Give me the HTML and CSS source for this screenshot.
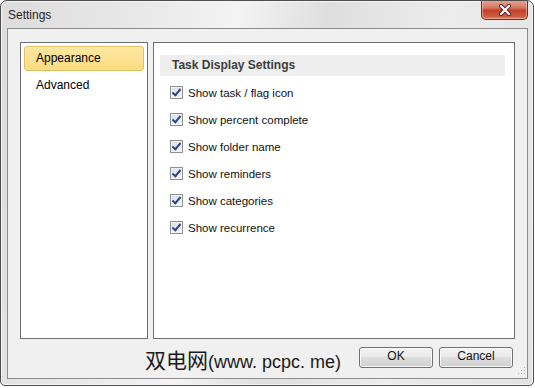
FILE: index.html
```html
<!DOCTYPE html>
<html lang="en">
<head>
  <meta charset="UTF-8" />
  <title>Settings</title>
  <link rel="stylesheet" href="styles.css">
</head>
<body>
  <div class="window">
    <div class="titlebar">
      <span class="title">Settings</span>
      <button class="close">
        <svg width="16" height="12" viewBox="0 0 16 12">
          <path d="M4 2 L12 10 M12 2 L4 10" stroke="#5a2218" stroke-width="4" stroke-linecap="round"/>
          <path d="M4 2 L12 10 M12 2 L4 10" stroke="#fff" stroke-width="2.2" stroke-linecap="round"/>
        </svg>
      </button>
    </div>

    <div class="client">
      <div class="panels">
        <div class="panel nav">
          <div class="nav-item active">Appearance</div>
          <div class="nav-item">Advanced</div>
        </div>

        <div class="panel content">
          <div class="section-head">Task Display Settings</div>
          <div class="option"><span class="check"></span>Show task / flag icon</div>
          <div class="option"><span class="check"></span>Show percent complete</div>
          <div class="option"><span class="check"></span>Show folder name</div>
          <div class="option"><span class="check"></span>Show reminders</div>
          <div class="option"><span class="check"></span>Show categories</div>
          <div class="option"><span class="check"></span>Show recurrence</div>
        </div>
      </div>

      <div class="footer">
        <span class="mark"><span class="mark-cn">双电网</span>(www. pcpc. me)</span>
        <button class="btn ok">OK</button>
        <button class="btn">Cancel</button>
        <svg class="grip" width="8" height="8" viewBox="0 0 8 8">
          <rect x="6" y="0" width="1" height="1" fill="#aaa"/>
          <rect x="3" y="3" width="1" height="1" fill="#aaa"/>
          <rect x="6" y="3" width="1" height="1" fill="#aaa"/>
          <rect x="0" y="6" width="1" height="1" fill="#aaa"/>
          <rect x="3" y="6" width="1" height="1" fill="#aaa"/>
          <rect x="6" y="6" width="1" height="1" fill="#aaa"/>
        </svg>
      </div>
    </div>
  </div>
</body>
</html>
```

FILE: styles.css
```css
* {
  box-sizing: border-box;
}

body {
  margin: 0;
  background: #fff;
  font-family: 'Liberation Sans', Arial, sans-serif;
  font-size: 12px;
  color: #000;
}

.window {
  width: 534px;
  height: 386px;
  border: 1px solid #4d4d4d;
  border-radius: 7px 7px 5px 5px;
  background: linear-gradient(100deg, #dcdcdc 0%, #e9e9e9 25%, #f3f3f3 40%, #dedede 55%, #ececec 75%, #e2e2e2 100%);
  box-shadow: inset 0 0 0 1px #f6f6f6;
  display: flex;
  flex-direction: column;
  overflow: hidden;
}

.titlebar {
  height: 27px;
  flex-shrink: 0;
  display: flex;
  align-items: flex-start;
  padding-left: 7px;
}

.title {
  margin-top: 7px;
  color: #1e1e1e;
}

.close {
  margin-left: auto;
  margin-right: 5px;
  margin-top: -1px;
  width: 47px;
  height: 20px;
  border: 1px solid #6b2a1e;
  border-top: none;
  border-radius: 0 0 5px 5px;
  background: linear-gradient(#e8a898 0%, #d77760 40%, #c0422b 55%, #cf5b40 85%, #e07a5c 100%);
  box-shadow: inset 0 0 0 1px rgba(255, 220, 210, 0.5);
  display: flex;
  align-items: center;
  justify-content: center;
  padding: 0;
}

.client {
  flex: 1;
  min-height: 0;
  margin: 0 5px 6px 6px;
  border: 1px solid #8c8c8c;
  background: #f0f0f0;
  padding: 13px 12px 0 12px;
  display: flex;
  flex-direction: column;
}

.panels {
  display: flex;
  gap: 5px;
  height: 297px;
  flex-shrink: 0;
}

.panel {
  background: #fff;
  border: 1px solid #6e6e6e;
}

.nav {
  width: 128px;
  padding: 3px;
}

.nav-item {
  height: 25px;
  line-height: 23px;
  padding-left: 11px;
  border: 1px solid transparent;
  border-radius: 3px;
  margin-bottom: 2px;
}

.nav-item.active {
  background: linear-gradient(#fde8a4, #fbdb7e);
  border-color: #e0c064;
}

.content {
  flex: 1;
  padding: 12px 9px 0 6px;
}

.section-head {
  height: 21px;
  line-height: 21px;
  background: #eeeeee;
  padding-left: 12px;
  font-weight: bold;
  color: #3c3c3c;
  margin-bottom: 3px;
}

.option {
  height: 27px;
  display: flex;
  align-items: center;
  padding-left: 10px;
  gap: 5px;
  color: #111;
  font-size: 11.5px;
}

.check {
  width: 13px;
  height: 13px;
  border: 1px solid #8e8f8f;
  background: linear-gradient(135deg, #d8dce6, #f6f7f9);
  box-shadow: inset 0 0 0 1px #f4f4f4;
  position: relative;
}

.check::after {
  content: "";
  position: absolute;
  left: 3px;
  top: 0px;
  width: 3px;
  height: 7px;
  border: solid #2a4683;
  border-width: 0 2px 2px 0;
  transform: rotate(40deg);
}

.footer {
  display: flex;
  align-items: flex-start;
  margin-top: 8px;
  position: relative;
  flex: 1;
}

.mark {
  margin-left: 125px;
  margin-top: -1px;
  white-space: nowrap;
  font-family: 'Liberation Sans', 'Noto Sans CJK SC', sans-serif;
  font-size: 18px;
  line-height: 26px;
  color: #1a1a1a;
}

.mark-cn {
  font-family: 'Noto Sans CJK SC', sans-serif;
  font-size: 21px;
}

.btn {
  width: 74px;
  height: 21px;
  margin-left: 6px;
  border: 1px solid #707070;
  border-radius: 3px;
  background: linear-gradient(#f2f2f2 0%, #ebebeb 45%, #dddddd 50%, #cfcfcf 100%);
  box-shadow: inset 0 0 0 1px #fbfbfb;
  font-family: 'Liberation Sans', Arial, sans-serif;
  font-size: 12px;
  color: #111;
  padding: 0 0 3px;
}

.btn.ok {
  margin-left: auto;
}

.btn:last-of-type {
  margin-right: 2px;
}

.grip {
  position: absolute;
  right: -11px;
  bottom: 3px;
}
```
